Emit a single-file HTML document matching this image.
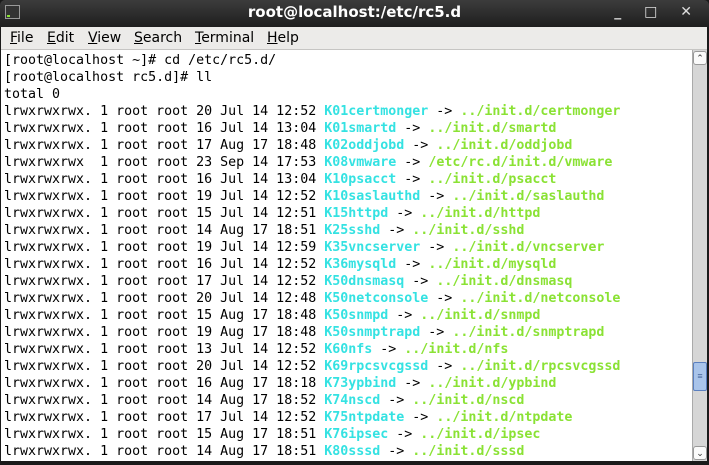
<!DOCTYPE html>
<html><head><meta charset="utf-8"><style>
*{margin:0;padding:0;box-sizing:border-box}
body{width:709px;height:465px;overflow:hidden;background:#1a1a1a;position:relative;font-family:"Liberation Sans","DejaVu Sans",sans-serif}
#title{position:absolute;left:0;top:0;width:709px;height:27px;background:linear-gradient(#3c3c3c,#1e1e1e);color:#fff;font-family:"DejaVu Sans",sans-serif;font-weight:bold;font-size:15px;text-align:center;line-height:25px;border-radius:5px 5px 0 0}
#icon{position:absolute;left:5px;top:5px;width:15px;height:14px;background:#333;border:1px solid #999}
#icon::after{content:"";position:absolute;left:1px;bottom:1px;width:3px;height:2px;background:#8ae234}
#ctrl{position:absolute;right:8px;top:0;color:#ddd;font-size:14px;letter-spacing:9px;font-family:"DejaVu Sans",sans-serif}
#menu{position:absolute;left:1px;top:27px;width:706px;height:23px;background:#ecebe9;border-bottom:1px solid #c6c5c3;font-family:"DejaVu Sans",sans-serif;font-size:14px;line-height:22px;color:#000}
#menu span{position:absolute;top:0}
#menu u{text-decoration:underline}
#term{position:absolute;left:1px;top:50px;width:691px;height:411px;background:#fff;font-family:"DejaVu Sans Mono",monospace;font-size:13.3px;line-height:17px;color:#000;padding:2px 0 0 3px;white-space:pre;overflow:hidden}
.c{color:#34e2e2;font-weight:bold}.g{color:#8ae234;font-weight:bold}
#sb{position:absolute;left:692px;top:50px;width:15px;height:411px;background:#d6d6d6;border-left:1px solid #aaa}
.btn{position:absolute;left:0;width:14px;height:14px;background:#fafafa;border:1px solid #999;border-radius:3px;font-size:9px;text-align:center;line-height:12px;color:#333}
#thumb{position:absolute;left:0;top:312px;width:14px;height:29px;background:#a9c4ea;border:1px solid #5a7fbf;border-radius:2px;color:#46659a;font-size:9px;text-align:center;line-height:26px}
#bot{position:absolute;left:0;top:461px;width:709px;height:4px;background:#1a1a1a}
</style></head><body>
<div id="title"><div id="icon"></div>root@localhost:/etc/rc5.d<div id="ctrl">_ □ ✕</div></div>
<div id="menu"><span style="left:9px"><u>F</u>ile</span><span style="left:46px"><u>E</u>dit</span><span style="left:87px"><u>V</u>iew</span><span style="left:133px"><u>S</u>earch</span><span style="left:194px"><u>T</u>erminal</span><span style="left:266px"><u>H</u>elp</span></div>
<div id="term">[root@localhost ~]# cd /etc/rc5.d/
[root@localhost rc5.d]# ll
total 0
lrwxrwxrwx. 1 root root 20 Jul 14 12:52 <span class="c">K01certmonger</span> -&gt; <span class="g">../init.d/certmonger</span>
lrwxrwxrwx. 1 root root 16 Jul 14 13:04 <span class="c">K01smartd</span> -&gt; <span class="g">../init.d/smartd</span>
lrwxrwxrwx. 1 root root 17 Aug 17 18:48 <span class="c">K02oddjobd</span> -&gt; <span class="g">../init.d/oddjobd</span>
lrwxrwxrwx  1 root root 23 Sep 14 17:53 <span class="c">K08vmware</span> -&gt; <span class="g">/etc/rc.d/init.d/vmware</span>
lrwxrwxrwx. 1 root root 16 Jul 14 13:04 <span class="c">K10psacct</span> -&gt; <span class="g">../init.d/psacct</span>
lrwxrwxrwx. 1 root root 19 Jul 14 12:52 <span class="c">K10saslauthd</span> -&gt; <span class="g">../init.d/saslauthd</span>
lrwxrwxrwx. 1 root root 15 Jul 14 12:51 <span class="c">K15httpd</span> -&gt; <span class="g">../init.d/httpd</span>
lrwxrwxrwx. 1 root root 14 Aug 17 18:51 <span class="c">K25sshd</span> -&gt; <span class="g">../init.d/sshd</span>
lrwxrwxrwx. 1 root root 19 Jul 14 12:59 <span class="c">K35vncserver</span> -&gt; <span class="g">../init.d/vncserver</span>
lrwxrwxrwx. 1 root root 16 Jul 14 12:52 <span class="c">K36mysqld</span> -&gt; <span class="g">../init.d/mysqld</span>
lrwxrwxrwx. 1 root root 17 Jul 14 12:52 <span class="c">K50dnsmasq</span> -&gt; <span class="g">../init.d/dnsmasq</span>
lrwxrwxrwx. 1 root root 20 Jul 14 12:48 <span class="c">K50netconsole</span> -&gt; <span class="g">../init.d/netconsole</span>
lrwxrwxrwx. 1 root root 15 Aug 17 18:48 <span class="c">K50snmpd</span> -&gt; <span class="g">../init.d/snmpd</span>
lrwxrwxrwx. 1 root root 19 Aug 17 18:48 <span class="c">K50snmptrapd</span> -&gt; <span class="g">../init.d/snmptrapd</span>
lrwxrwxrwx. 1 root root 13 Jul 14 12:52 <span class="c">K60nfs</span> -&gt; <span class="g">../init.d/nfs</span>
lrwxrwxrwx. 1 root root 20 Jul 14 12:52 <span class="c">K69rpcsvcgssd</span> -&gt; <span class="g">../init.d/rpcsvcgssd</span>
lrwxrwxrwx. 1 root root 16 Aug 17 18:18 <span class="c">K73ypbind</span> -&gt; <span class="g">../init.d/ypbind</span>
lrwxrwxrwx. 1 root root 14 Aug 17 18:52 <span class="c">K74nscd</span> -&gt; <span class="g">../init.d/nscd</span>
lrwxrwxrwx. 1 root root 17 Jul 14 12:52 <span class="c">K75ntpdate</span> -&gt; <span class="g">../init.d/ntpdate</span>
lrwxrwxrwx. 1 root root 15 Aug 17 18:51 <span class="c">K76ipsec</span> -&gt; <span class="g">../init.d/ipsec</span>
lrwxrwxrwx. 1 root root 14 Aug 17 18:51 <span class="c">K80sssd</span> -&gt; <span class="g">../init.d/sssd</span></div>
<div id="sb"><div class="btn" style="top:1px">⌃</div><div id="thumb">≡</div><div class="btn" style="top:396px">⌄</div></div>
<div id="bot"></div>
</body></html>
